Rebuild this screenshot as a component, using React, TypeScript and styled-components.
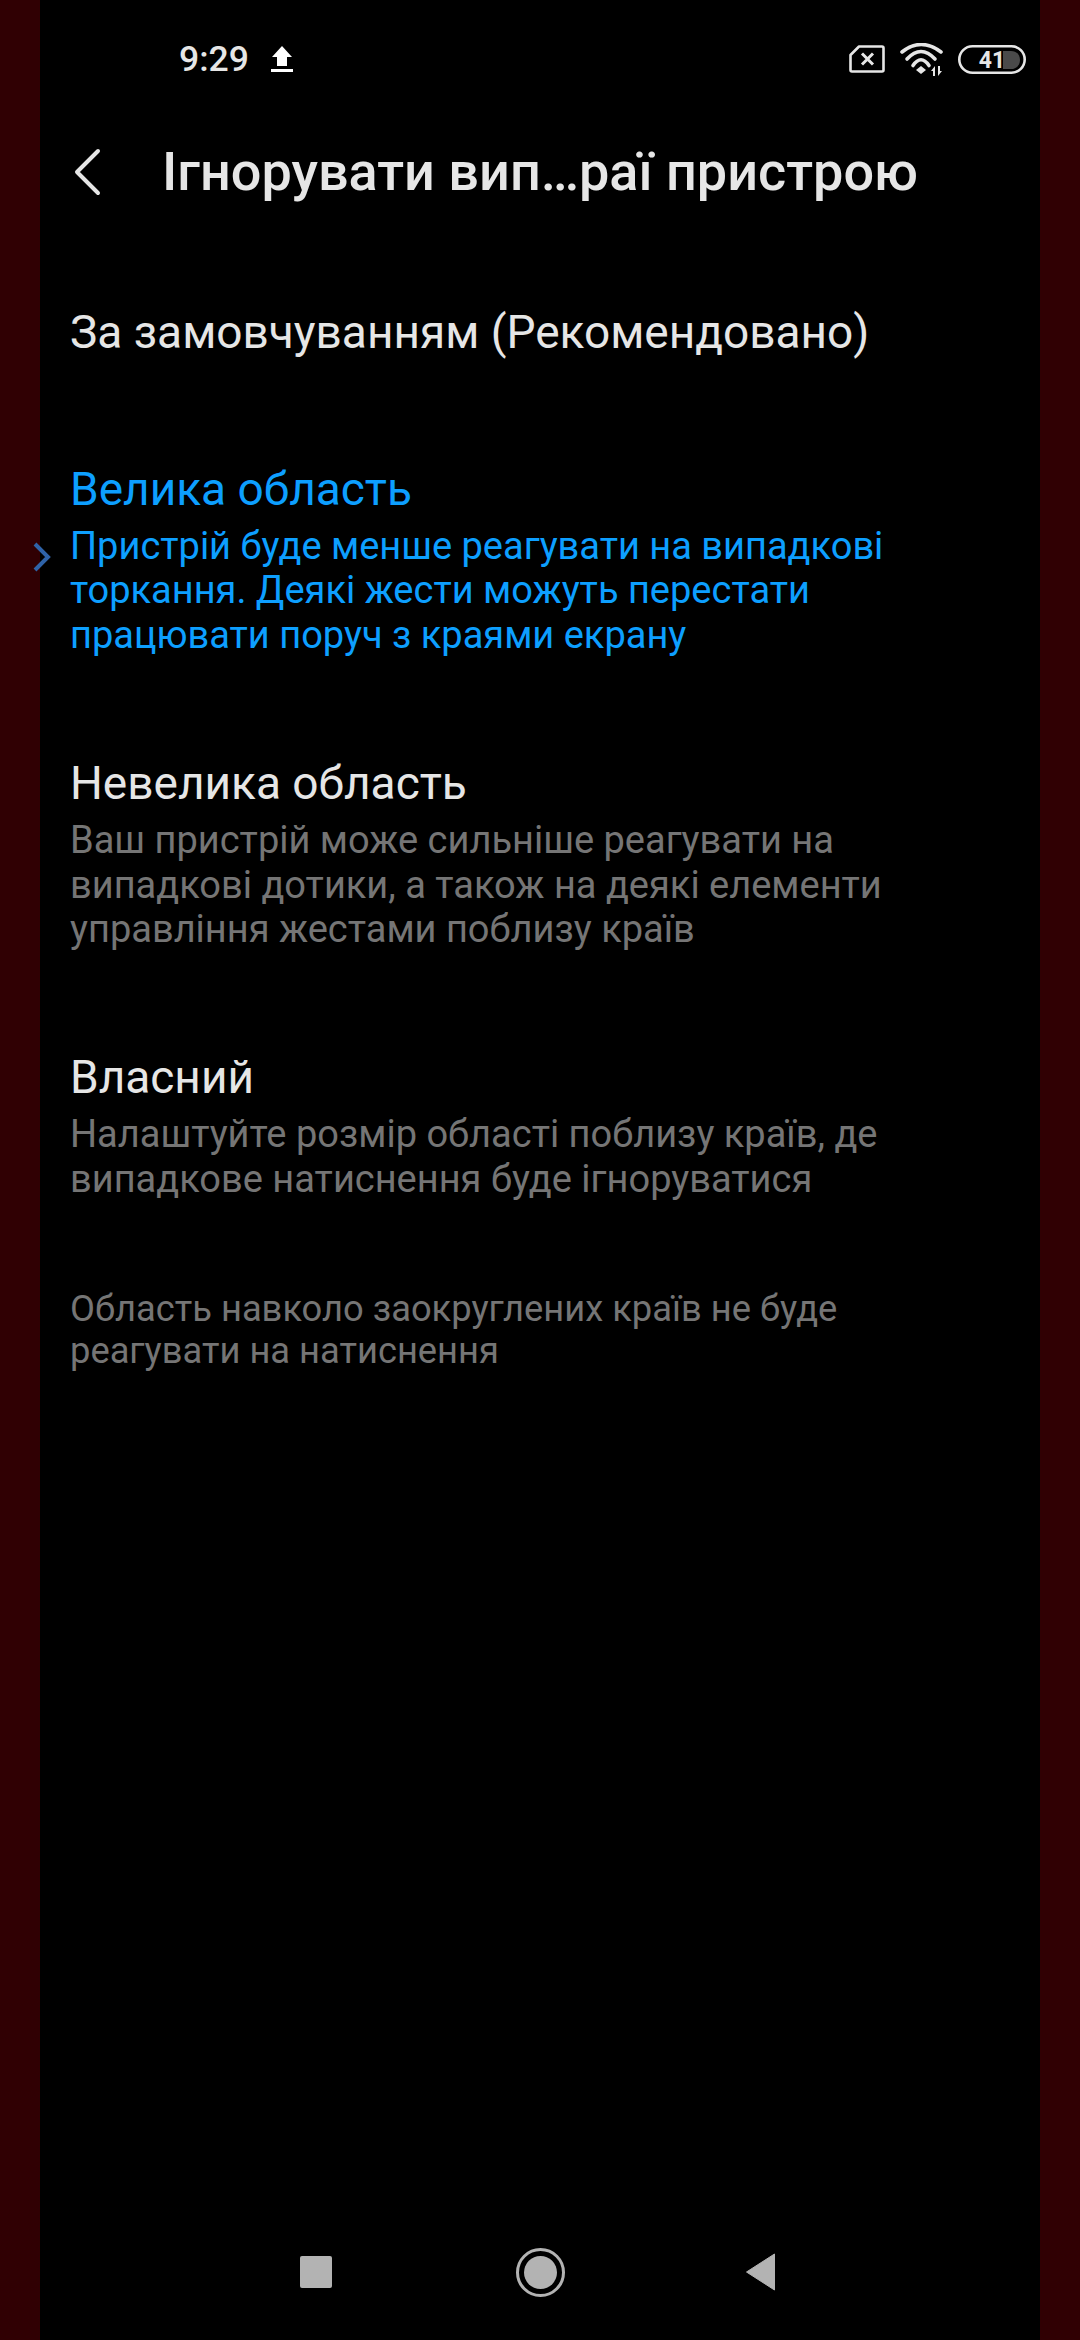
import styled, { createGlobalStyle } from "styled-components";

const GlobalStyle = createGlobalStyle`
  html, body {
    margin: 0;
    padding: 0;
    background: #000;
  }
`;

const Screen = styled.div`
  position: relative;
  width: 1080px;
  height: 2340px;
  display: flex;
  overflow: hidden;
  background: #000;
  font-family: Roboto, "Noto Sans", sans-serif;
`;
const EdgeBand = styled.div`
  width: 40px;
  flex: none;
  background: #300003;
`;
const Content = styled.div`
  flex: 1;
  min-width: 0;
  display: flex;
  flex-direction: column;
`;
const StatusBar = styled.div`
  height: 58px;
  margin-top: 30px;
  padding: 0 14px 0 139px;
  display: flex;
  align-items: center;
`;
const Time = styled.span`
  color: #e6e6e6;
  font-size: 35.5px;
  font-weight: 500;
  line-height: 40px;
`;
const UploadIcon = styled.svg`
  margin-left: 22px;
  width: 22px;
  height: 26px;
`;
const StatusIcons = styled.div`
  margin-left: auto;
  display: flex;
  align-items: center;
  gap: 15px;
`;
const TitleBar = styled.div`
  height: 96px;
  margin-top: 36px;
  display: flex;
  align-items: center;
`;
const BackIcon = styled.svg`
  margin-left: 33px;
  width: 28px;
  height: 48px;
`;
const Title = styled.h1`
  margin: 0 0 0 61px;
  color: #e6e6e6;
  font-size: 54px;
  font-weight: 500;
  line-height: 64px;
  white-space: nowrap;
`;
const Options = styled.div`
  margin-top: 77px;
  padding: 0 99px 0 30px;
  display: flex;
  flex-direction: column;
`;
const Option = styled.div<{ $gap: number }>`
  margin-bottom: ${(p) => p.$gap}px;
`;
const OptionTitle = styled.div<{ $active?: boolean }>`
  color: ${(p) => (p.$active ? "#0d9fff" : "#e6e6e6")};
  font-size: 46px;
  line-height: 70px;
  white-space: nowrap;
`;
const OptionText = styled.div<{ $active?: boolean }>`
  color: ${(p) => (p.$active ? "#0d9fff" : "#757575")};
  font-size: 38px;
  line-height: 44.4px;
`;
const Note = styled.div`
  color: #757575;
  font-size: 36.3px;
  line-height: 42px;
`;
const Marker = styled.svg`
  position: absolute;
  left: 32px;
  top: 541px;
  width: 20px;
  height: 32px;
`;
const NavBar = styled.div`
  margin-top: auto;
  height: 100px;
  margin-bottom: 18px;
  padding-left: 260px;
  display: flex;
  align-items: center;
`;
const RecentKey = styled.div`
  width: 32px;
  height: 32px;
  border-radius: 2px;
  background: #b3b3b3;
`;
const HomeKey = styled.div`
  margin-left: 184px;
  width: 49px;
  height: 49px;
  box-sizing: border-box;
  padding: 5px;
  border: 3px solid #b3b3b3;
  border-radius: 50%;
  background: #b3b3b3;
  background-clip: content-box;
`;
const BackKey = styled.svg`
  margin-left: 180px;
  width: 31px;
  height: 38px;
`;

const options = [
  {
    title: "Велика область",
    text: "Пристрій буде менше реагувати на випадкові торкання. Деякі жести можуть перестати працювати поруч з краями екрану",
    active: true,
    gap: 91,
  },
  {
    title: "Невелика область",
    text: "Ваш пристрій може сильніше реагувати на випадкові дотики, а також на деякі елементи управління жестами поблизу країв",
    gap: 91,
  },
  {
    title: "Власний",
    text: "Налаштуйте розмір області поблизу країв, де випадкове натиснення буде ігноруватися",
    gap: 87,
  },
];

const App = () => {
  return (
    <Screen>
      <GlobalStyle />
      <EdgeBand />
      <Content>
        <StatusBar>
          <Time>9:29</Time>
          <UploadIcon viewBox="0 0 22 26">
            <path d="M11 0L21 11H16V20H6V11H1Z" fill="#fff" />
            <rect x="0" y="23" width="22" height="3" fill="#fff" />
          </UploadIcon>
          <StatusIcons>
            <svg width="36" height="28" viewBox="0 0 36 28" fill="none">
              <path
                d="M10 1.5H33C34 1.5 34.5 2 34.5 3V25C34.5 26 34 26.5 33 26.5H3C2 26.5 1.5 26 1.5 25V10Z"
                stroke="#e6e6e6"
                strokeWidth="2.6"
                strokeLinejoin="round"
              />
              <path d="M13 8.5L24 19.5M24 8.5L13 19.5" stroke="#e6e6e6" strokeWidth="3" />
            </svg>
            <svg width="43" height="33" viewBox="0 0 43 33" fill="none">
              <path d="M2 9Q21 -6 41 9" stroke="#e6e6e6" strokeWidth="3.6" strokeLinecap="round" />
              <path d="M7 16Q21 1 35 16" stroke="#e6e6e6" strokeWidth="3.6" strokeLinecap="round" />
              <path d="M13 22.5Q21 11 29 22.5" stroke="#e6e6e6" strokeWidth="3.6" strokeLinecap="round" />
              <path d="M21 23L26 27L21 31L16 27Z" fill="#e6e6e6" />
              <path d="M35 23V33H33V28H31ZM38 33V23H40V28H42Z" fill="#e6e6e6" />
            </svg>
            <svg width="68" height="29" viewBox="0 0 68 29" fill="none">
              <rect x="1.3" y="1.3" width="65.4" height="26.4" rx="13.2" stroke="#e6e6e6" strokeWidth="2.6" />
              <path d="M45 6H53C58 6 62 9.5 62 15C62 20.5 58 24 53 24H45Z" fill="#4a4a4a" />
              <text x="34" y="23" textAnchor="middle" fill="#e6e6e6" fontSize="23" fontWeight="700" fontFamily="Roboto, sans-serif">
                41
              </text>
            </svg>
          </StatusIcons>
        </StatusBar>
        <TitleBar>
          <BackIcon viewBox="0 0 28 48" fill="none">
            <path
              d="M25 3L4 24L25 45"
              stroke="#e6e6e6"
              strokeWidth="4"
              strokeLinecap="round"
              strokeLinejoin="round"
            />
          </BackIcon>
          <Title>Ігнорувати вип…раї пристрою</Title>
        </TitleBar>
        <Options>
          <Option $gap={87}>
            <OptionTitle>За замовчуванням (Рекомендовано)</OptionTitle>
          </Option>
          {options.map((o) => (
            <Option key={o.title} $gap={o.gap}>
              <OptionTitle $active={o.active}>{o.title}</OptionTitle>
              <OptionText $active={o.active}>{o.text}</OptionText>
            </Option>
          ))}
          <Note>Область навколо заокруглених країв не буде реагувати на натиснення</Note>
        </Options>
        <NavBar>
          <RecentKey />
          <HomeKey />
          <BackKey viewBox="0 0 30 38">
            <path d="M29 1V37L1 19Z" fill="#b3b3b3" stroke="#b3b3b3" strokeWidth="1" strokeLinejoin="round" />
          </BackKey>
        </NavBar>
      </Content>
      <EdgeBand />
      <Marker viewBox="0 0 20 32" fill="none">
        <path d="M3 3L16 16L3 29" stroke="#2f63a8" strokeWidth="4" />
      </Marker>
    </Screen>
  );
};

export default App;
